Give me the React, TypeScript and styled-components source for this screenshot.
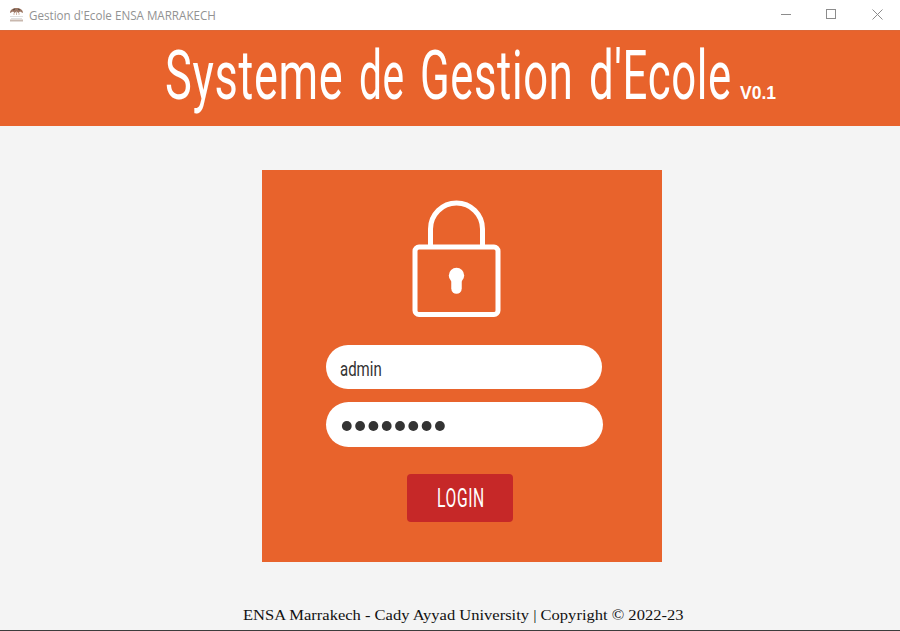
import React, { useLayoutEffect, useRef, useState } from "react";
import styled, { createGlobalStyle } from "styled-components";

const GlobalStyle = createGlobalStyle`
  * { box-sizing: border-box; }
  html, body { margin: 0; padding: 0; overflow: hidden; }
  body { background: #f4f4f4; }
`;

const Window = styled.div`
  width: 900px;
  height: 631px;
  display: flex;
  flex-direction: column;
  background: #f4f4f4;
  border-bottom: 1px solid #3c3c3c;
  overflow: hidden;
`;

const TitleBar = styled.header`
  height: 30px;
  flex: none;
  display: flex;
  align-items: center;
  background: #fff;
  padding-left: 9px;
`;

const AppIcon = styled.svg`
  width: 15px;
  height: 16px;
  margin-right: 5px;
  flex: none;
`;

const Controls = styled.div`
  margin-left: auto;
  display: flex;
  height: 100%;
`;

const Control = styled.button`
  width: 46px;
  height: 28px;
  padding: 0;
  border: 0;
  background: none;
  display: grid;
  place-items: center;
  svg { display: block; stroke: #8c8c8c; fill: none; stroke-width: 1; }
`;

const Banner = styled.div`
  height: 96px;
  flex: none;
  display: flex;
  background: #e8632c;
  border-top: 1px solid #dc6737;
  padding-left: 165px;
`;

const Heading = styled.h1`
  margin: 0;
  display: flex;
  gap: 16px;
  color: #fff;
`;

const Version = styled.span`
  margin: 51px 0 0 9px;
  color: #fff;
  font: bold 17.5px/22px "Liberation Sans", Arial, sans-serif;
`;

const Main = styled.main`
  flex: 1;
  display: flex;
  flex-direction: column;
  align-items: center;
  padding: 44px 0 0 24px;
`;

const LoginCard = styled.form`
  width: 400px;
  height: 392px;
  background: #e8632c;
  display: flex;
  flex-direction: column;
  align-items: flex-start;
  padding: 30px 0 0 64px;
`;

const Lock = styled.svg`
  width: 90px;
  height: 118px;
  margin-left: 86px;
  display: block;
`;

const Field = styled.div<{ $wide?: boolean }>`
  width: ${(p) => (p.$wide ? 277 : 276)}px;
  height: ${(p) => (p.$wide ? 45 : 44)}px;
  margin-top: ${(p) => (p.$wide ? 13 : 27)}px;
  border-radius: 23px;
  background: #fff;
  padding-left: ${(p) => (p.$wide ? 15 : 14)}px;
  display: flex;
  align-items: center;
`;

const Dots = styled.svg`
  width: 108px;
  height: 12px;
  margin-top: 3px;
  fill: #333;
`;

const LoginButton = styled.button`
  width: 106px;
  height: 48px;
  margin: 27px 0 0 81px;
  padding: 0;
  border: 0;
  border-radius: 4px;
  background: #c62828;
  display: flex;
  align-items: center;
  justify-content: center;
`;

const Footer = styled.footer`
  margin: 42px 0 0 2px;
  height: 22px;
  width: 441px;
`;

const FitBox = styled.span<{ $width: number }>`
  display: block;
  flex: none;
  width: ${(p) => p.$width}px;
`;

const FitInner = styled.span`
  display: inline-block;
  white-space: pre;
  transform-origin: 0 50%;
`;

const HeadingWord = styled(FitInner)`
  font: 400 68px/90px Roboto, sans-serif;
  letter-spacing: 1px;
`;

const CaptionText = styled(FitInner)`
  font: 12px/18px "Open Sans", "Noto Sans", sans-serif;
  color: #929292;
  margin-top: -2px;
`;

const FieldText = styled(FitInner)`
  font: 400 20px/24px Roboto, sans-serif;
  color: #333;
  padding-top: 3px;
`;

const ButtonText = styled(FitInner)`
  font: 400 26px/30px Roboto, sans-serif;
  letter-spacing: 1px;
  color: #fff;
`;

const FooterText = styled(FitInner)`
  font: 15.5px/22px "Liberation Serif", serif;
  color: #111;
`;

/* Condenses or stretches a line of text to an exact width. */
function Fit({ width, as: Text, children }: { width: number; as: React.ElementType; children: string }) {
  const ref = useRef<HTMLSpanElement>(null);
  const [scale, setScale] = useState(1);
  useLayoutEffect(() => {
    const el = ref.current;
    if (!el) return;
    const spacing = parseFloat(getComputedStyle(el).letterSpacing) || 0;
    setScale(width / (el.offsetWidth - spacing));
  }, [width, children]);
  return (
    <FitBox $width={width}>
      <Text ref={ref} style={{ transform: `scaleX(${scale})` }}>{children}</Text>
    </FitBox>
  );
}

const words: [string, number][] = [
  ["Systeme", 178],
  ["de", 45],
  ["Gestion", 153],
  ["d'Ecole", 142],
];

export default function App() {
  return (
    <>
      <GlobalStyle />
      <Window>
        <TitleBar>
          <AppIcon viewBox="0 0 15 16">
            <path d="M1 6C1 2.5 4 1 7.5 1S14 2.5 14 6L11 4.5 9.5 6 7.5 4.5 5.5 6 4 4.5Z" fill="#9b7663" />
            <path d="M4 3L6 2M9 2L11 3" stroke="#57483f" />
            <path d="M5 6V8M7.5 5V8M10 6V8" stroke="#d0b5a5" />
            <path d="M1 9.5H14M2 11.5H13" stroke="#e0e0e0" />
            <path d="M1 13.5H14" stroke="#c9b8ae" strokeWidth="2" />
          </AppIcon>
          <Fit width={187} as={CaptionText}>Gestion d'Ecole ENSA MARRAKECH</Fit>
          <Controls>
            <Control aria-label="Minimize">
              <svg width="12" height="11"><path d="M2 5.5H12" /></svg>
            </Control>
            <Control aria-label="Maximize">
              <svg width="10" height="10"><rect x=".5" y=".5" width="9" height="9" /></svg>
            </Control>
            <Control aria-label="Close">
              <svg width="11" height="11"><path d="M.5 .5L10.5 10.5M10.5 .5L.5 10.5" /></svg>
            </Control>
          </Controls>
        </TitleBar>
        <Banner>
          <Heading>
            {words.map(([word, width]) => (
              <Fit key={word} width={width} as={HeadingWord}>{word}</Fit>
            ))}
          </Heading>
          <Version>V0.1</Version>
        </Banner>
        <Main>
          <LoginCard onSubmit={(e) => e.preventDefault()}>
            <Lock viewBox="0 0 90 118">
              <g fill="none" stroke="#fff" strokeWidth="5">
                <path d="M18.5 46V29A25.8 25.8 0 0 1 70.5 29V46" />
                <rect x="3" y="47" width="83" height="67.5" rx="4" />
              </g>
              <circle cx="44.5" cy="75.5" r="7.7" fill="#fff" />
              <path d="M44.5 76V88.5" stroke="#fff" strokeWidth="10.5" strokeLinecap="round" />
            </Lock>
            <Field>
              <Fit width={42} as={FieldText}>admin</Fit>
            </Field>
            <Field $wide>
              <Dots viewBox="0 0 108 12">
                {Array.from({ length: 8 }, (_, i) => (
                  <circle key={i} cx={5.8 + i * 13.3} cy="6" r="4.9" />
                ))}
              </Dots>
            </Field>
            <LoginButton type="submit">
              <Fit width={47} as={ButtonText}>LOGIN</Fit>
            </LoginButton>
          </LoginCard>
          <Footer>
            <Fit width={440} as={FooterText}>ENSA Marrakech - Cady Ayyad University | Copyright © 2022-23</Fit>
          </Footer>
        </Main>
      </Window>
    </>
  );
}
